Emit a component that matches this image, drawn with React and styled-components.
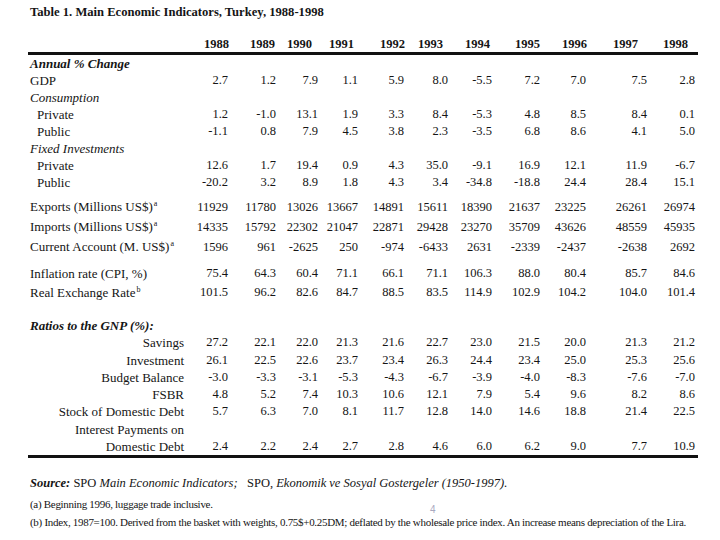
import React from 'react';
import styled, { createGlobalStyle } from 'styled-components';

const GlobalStyle = createGlobalStyle`
  body {
    margin: 0;
    background: #ffffff;
    color: #151515;
    font-family: "Liberation Serif", "Times New Roman", serif;
  }
`

const dataCols = '156px 44px 48px 42px 40px 46px 44px 44px 48px 46px 61px 48px';
const yearCols = '156px 45px 46px 37px 42px 51px 38px 47px 50px 47px 51px 50px';

const Page = styled.div`
  position: relative;
  width: 720px;
  height: 540px;
  box-sizing: border-box;
  padding: 4px 0 0 28px;
  overflow: hidden;
`

const Title = styled.div`
  padding-left: 2px;
  font-size: 12.6px;
  font-weight: bold;
  line-height: 16px;
`

const Table = styled.div`
  width: 670px;
`

const YearRow = styled.div`
  display: grid;
  grid-template-columns: ${yearCols};
  margin-top: 16px;
  height: 16px;
  line-height: 16px;
  font-size: 12.5px;
  font-weight: bold;
`

const Year = styled.div`
  text-align: right;
`

const Rule = styled.div`
  height: 3px;
  background: #111;
`

const Section = styled.div`
  margin-top: ${p => p.$gap || 0}px;
`

const Row = styled.div`
  display: grid;
  grid-template-columns: ${dataCols};
  height: ${p => p.$h * (p.$lines || 1)}px;
  line-height: ${p => p.$h}px;
  font-size: 13px;
`

const Label = styled.div`
  grid-column: ${p => (p.$span ? '1 / -1' : 'auto')};
  padding-left: ${p => (p.$right ? 0 : p.$indent ? 9 : 2)}px;
  text-align: ${p => (p.$right ? 'right' : 'left')};
  font-style: ${p => (p.$italic ? 'italic' : 'normal')};
  font-weight: ${p => (p.$bold ? 'bold' : 'normal')};
  white-space: nowrap;
`

const Value = styled.div`
  align-self: end;
  text-align: right;
  font-size: 12.5px;
  height: ${p => p.$h}px;
`

const Sup = styled.sup`
  font-size: 8px;
  line-height: 0;
  vertical-align: 5px;
  margin-left: 1px;
`

const Source = styled.div`
  margin-top: 17px;
  padding-left: 2px;
  font-size: 12.5px;
  line-height: 16px;
  white-space: nowrap;
`

const Notes = styled.div`
  margin-top: 4px;
  padding-left: 2px;
  font-size: 11px;
  letter-spacing: -0.3px;
  line-height: 18px;
  white-space: nowrap;
`

const PageNumber = styled.div`
  position: absolute;
  left: 430px;
  top: 504px;
  font-family: "Liberation Sans", Arial, sans-serif;
  font-size: 10px;
  color: #a8a8c0;
`

const years = [1988, 1989, 1990, 1991, 1992, 1993, 1994, 1995, 1996, 1997, 1998];

const sections = [
  {
    h: 17,
    gap: 0,
    rows: [
      { label: 'Annual % Change', head: true, bold: true },
      { label: 'GDP', values: ['2.7', '1.2', '7.9', '1.1', '5.9', '8.0', '-5.5', '7.2', '7.0', '7.5', '2.8'] },
      { label: 'Consumption', head: true },
      { label: 'Private', indent: true, values: ['1.2', '-1.0', '13.1', '1.9', '3.3', '8.4', '-5.3', '4.8', '8.5', '8.4', '0.1'] },
      { label: 'Public', indent: true, values: ['-1.1', '0.8', '7.9', '4.5', '3.8', '2.3', '-3.5', '6.8', '8.6', '4.1', '5.0'] },
      { label: 'Fixed Investments', head: true },
      { label: 'Private', indent: true, values: ['12.6', '1.7', '19.4', '0.9', '4.3', '35.0', '-9.1', '16.9', '12.1', '11.9', '-6.7'] },
      { label: 'Public', indent: true, values: ['-20.2', '3.2', '8.9', '1.8', '4.3', '3.4', '-34.8', '-18.8', '24.4', '28.4', '15.1'] },
    ],
  },
  {
    h: 20,
    gap: 6,
    rows: [
      { label: 'Exports (Millions US$)', sup: 'a', values: ['11929', '11780', '13026', '13667', '14891', '15611', '18390', '21637', '23225', '26261', '26974'] },
      { label: 'Imports (Millions US$)', sup: 'a', values: ['14335', '15792', '22302', '21047', '22871', '29428', '23270', '35709', '43626', '48559', '45935'] },
      { label: 'Current Account (M. US$)', sup: 'a', values: ['1596', '961', '-2625', '250', '-974', '-6433', '2631', '-2339', '-2437', '-2638', '2692'] },
    ],
  },
  {
    h: 19,
    gap: 7,
    rows: [
      { label: 'Inflation rate (CPI, %)', values: ['75.4', '64.3', '60.4', '71.1', '66.1', '71.1', '106.3', '88.0', '80.4', '85.7', '84.6'] },
      { label: 'Real Exchange Rate', sup: 'b', values: ['101.5', '96.2', '82.6', '84.7', '88.5', '83.5', '114.9', '102.9', '104.2', '104.0', '101.4'] },
    ],
  },
  {
    h: 17.3,
    gap: 15,
    right: true,
    rows: [
      { label: 'Ratios to the GNP (%):', head: true, bold: true },
      { label: 'Savings', values: ['27.2', '22.1', '22.0', '21.3', '21.6', '22.7', '23.0', '21.5', '20.0', '21.3', '21.2'] },
      { label: 'Investment', values: ['26.1', '22.5', '22.6', '23.7', '23.4', '26.3', '24.4', '23.4', '25.0', '25.3', '25.6'] },
      { label: 'Budget Balance', values: ['-3.0', '-3.3', '-3.1', '-5.3', '-4.3', '-6.7', '-3.9', '-4.0', '-8.3', '-7.6', '-7.0'] },
      { label: 'FSBR', values: ['4.8', '5.2', '7.4', '10.3', '10.6', '12.1', '7.9', '5.4', '9.6', '8.2', '8.6'] },
      { label: 'Stock of Domestic Debt', values: ['5.7', '6.3', '7.0', '8.1', '11.7', '12.8', '14.0', '14.6', '18.8', '21.4', '22.5'] },
      { label: ['Interest Payments on', 'Domestic Debt'], values: ['2.4', '2.2', '2.4', '2.7', '2.8', '4.6', '6.0', '6.2', '9.0', '7.7', '10.9'] },
    ],
  },
];

function TableRow({ row, h, right }) {
  const lines = Array.isArray(row.label) ? row.label.length : 1;

  if (row.head) {
    return (
      <Row $h={h}>
        <Label $span $italic $bold={row.bold}>{row.label}</Label>
      </Row>
    );
  }

  return (
    <Row $h={h} $lines={lines}>
      <Label $right={right} $indent={row.indent}>
        {lines > 1
          ? row.label.map(line => <div key={line}>{line}</div>)
          : row.label}
        {row.sup && <Sup>{row.sup}</Sup>}
      </Label>
      {row.values.map((v, i) => (
        <Value key={i} $h={h}>{v}</Value>
      ))}
    </Row>
  );
}

function App() {
  return (
    <Page>
      <GlobalStyle />
      <Title>Table 1. Main Economic Indicators, Turkey, 1988-1998</Title>
      <Table>
        <YearRow>
          <div />
          {years.map(y => <Year key={y}>{y}</Year>)}
        </YearRow>
        <Rule />
        {sections.map((s, i) => (
          <Section key={i} $gap={s.gap}>
            {s.rows.map((r, j) => (
              <TableRow key={j} row={r} h={s.h} right={s.right} />
            ))}
          </Section>
        ))}
        <Rule />
      </Table>
      <Source>
        <b><i>Source:</i></b> SPO <i>Main Economic Indicators;</i>&nbsp;&nbsp; SPO, <i>Ekonomik ve Sosyal Gostergeler (1950-1997).</i>
      </Source>
      <Notes>
        <div>(a) Beginning 1996, luggage trade inclusive.</div>
        <div>(b) Index, 1987=100. Derived from the basket with weights, 0.75$+0.25DM; deflated by the wholesale price index. An increase means depreciation of the Lira.</div>
      </Notes>
      <PageNumber>4</PageNumber>
    </Page>
  );
}

export default App;
